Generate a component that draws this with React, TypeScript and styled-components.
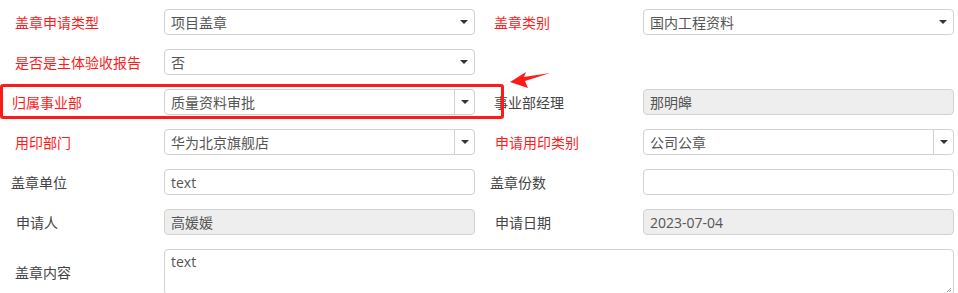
import React from 'react';
import styled, { createGlobalStyle } from 'styled-components';

const GlobalStyle = createGlobalStyle`
  html, body {
    margin: 0;
    padding: 0;
    background: #fff;
  }
  body {
    font-family: "Noto Sans CJK SC", "Open Sans", sans-serif;
    font-size: 14px;
    color: #333;
  }
`;

const Page = styled.div`
  position: relative;
  width: 958px;
  height: 293px;
  overflow: hidden;
  padding-top: 9px;
  box-sizing: border-box;
`;

const FormGrid = styled.div`
  display: grid;
  grid-template-columns: 479px 479px;
  row-gap: 14px;
`;

const Field = styled.div<{ $wide?: boolean }>`
  display: grid;
  grid-template-columns: ${(p) => (p.$wide ? '164px 790px' : '164px 311px')};
  grid-column: ${(p) => (p.$wide ? '1 / span 2' : 'auto')};
  align-items: center;
  min-height: 26px;
`;

const Label = styled.label<{ $required?: boolean; $indent?: number }>`
  padding-left: ${(p) => p.$indent ?? 15}px;
  font-size: 14px;
  line-height: 20px;
  color: ${(p) => (p.$required ? '#ff1a1a' : '#444')};
  white-space: nowrap;
`;

const Box = styled.div<{ $disabled?: boolean }>`
  position: relative;
  display: flex;
  align-items: center;
  height: 26px;
  box-sizing: border-box;
  border: 1px solid #d2d2d2;
  border-radius: 4px;
  background: ${(p) => (p.$disabled ? '#eeeeee' : '#fff')};
  color: #555;
  font-size: 14px;
  padding-left: 6px;
  font-family: "Open Sans", "Noto Sans CJK SC", sans-serif;
`;

const Value = styled.span`
  flex: 1;
  white-space: nowrap;
  overflow: hidden;
`;

const CaretWrap = styled.div<{ $split?: boolean }>`
  width: 19px;
  height: 100%;
  display: flex;
  align-items: center;
  justify-content: center;
  border-left: ${(p) => (p.$split ? '1px solid #d2d2d2' : 'none')};
  margin-right: ${(p) => (p.$split ? '0' : '1px')};
`;

const Caret = styled.span`
  width: 0;
  height: 0;
  border-left: 4px solid transparent;
  border-right: 4px solid transparent;
  border-top: 4px solid #333;
`;

const TextArea = styled.div`
  height: 46px;
  box-sizing: border-box;
  border: 1px solid #d2d2d2;
  border-radius: 4px;
  padding: 2px 6px;
  color: #555;
  font-family: "Open Sans", sans-serif;
  font-size: 14px;
  position: relative;
`;

const Grip = styled.svg`
  position: absolute;
  right: 1px;
  bottom: 1px;
`;

const Highlight = styled.div`
  position: absolute;
  left: 0;
  top: 84px;
  width: 504px;
  height: 35px;
  box-sizing: border-box;
  border: 3px solid #ff1a1a;
  border-radius: 3px;
  pointer-events: none;
`;

const Arrow = styled.svg`
  position: absolute;
  left: 506px;
  top: 66px;
`;

type SelectProps = { value: string; split?: boolean };

const Select: React.FC<SelectProps> = ({ value, split }) => (
  <Box>
    <Value>{value}</Value>
    <CaretWrap $split={split}>
      <Caret />
    </CaretWrap>
  </Box>
);

const Input: React.FC<{ value?: string; disabled?: boolean }> = ({ value, disabled }) => (
  <Box $disabled={disabled}>
    <Value>{value}</Value>
  </Box>
);

export default function App() {
  return (
    <>
      <GlobalStyle />
      <Page>
        <FormGrid>
          <Field>
            <Label $required>盖章申请类型</Label>
            <Select value="项目盖章" />
          </Field>
          <Field>
            <Label $required>盖章类别</Label>
            <Select value="国内工程资料" />
          </Field>

          <Field>
            <Label $required>是否是主体验收报告</Label>
            <Select value="否" />
          </Field>
          <Field />

          <Field>
            <Label $required $indent={12}>归属事业部</Label>
            <Select value="质量资料审批" split />
          </Field>
          <Field>
            <Label>事业部经理</Label>
            <Input value="那明皞" disabled />
          </Field>

          <Field>
            <Label $required>用印部门</Label>
            <Select value="华为北京旗舰店" split />
          </Field>
          <Field>
            <Label $required $indent={16}>申请用印类别</Label>
            <Select value="公司公章" split />
          </Field>

          <Field>
            <Label $indent={11}>盖章单位</Label>
            <Input value="text" />
          </Field>
          <Field>
            <Label $indent={11}>盖章份数</Label>
            <Input />
          </Field>

          <Field>
            <Label $indent={16}>申请人</Label>
            <Input value="高媛媛" disabled />
          </Field>
          <Field>
            <Label $indent={16}>申请日期</Label>
            <Input value="2023-07-04" disabled />
          </Field>

          <Field $wide>
            <Label>盖章内容</Label>
            <TextArea>
              text
              <Grip width="6" height="6" viewBox="0 0 6 6">
                <path d="M5 1 L1 5 M5 3 L3 5" stroke="#888" strokeWidth="0.8" />
              </Grip>
            </TextArea>
          </Field>
        </FormGrid>

        <Highlight />
        <Arrow width="48" height="24" viewBox="0 0 48 24">
          <polygon points="4,16 20,6 18,11 44,7 19,15 22,22" fill="#ff1a1a" />
        </Arrow>
      </Page>
    </>
  );
}
